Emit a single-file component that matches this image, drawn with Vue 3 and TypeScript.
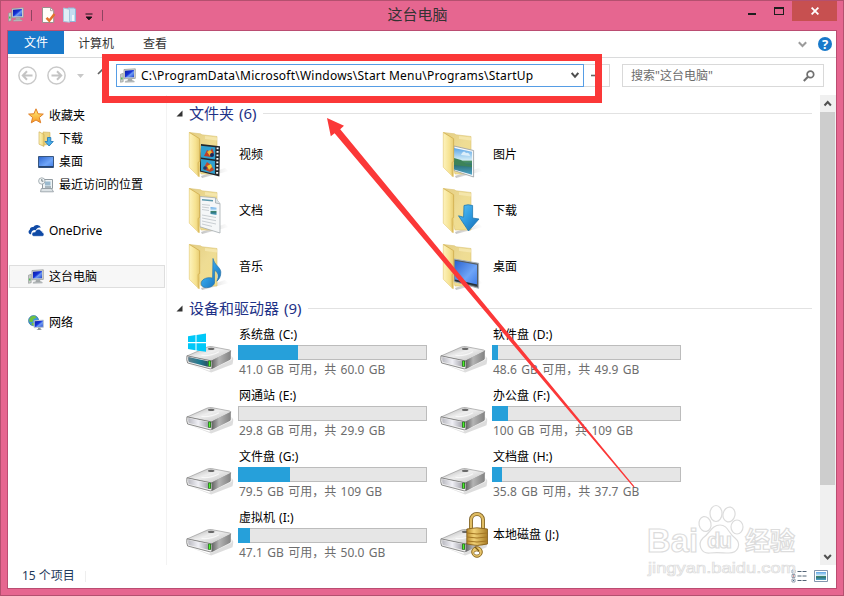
<script setup lang="ts">
interface NavItem { label: string; icon: string; level: number; selected?: boolean; gap?: boolean }
interface Folder { label: string; icon: string }
interface Drive { name: string; info?: string; used?: number; icon: string }

const nav: NavItem[] = [
  { label: '收藏夹', icon: 'star', level: 0 },
  { label: '下载', icon: 'dl-small', level: 1 },
  { label: '桌面', icon: 'desk-small', level: 1 },
  { label: '最近访问的位置', icon: 'recent', level: 1 },
  { label: 'OneDrive', icon: 'cloud', level: 0, gap: true },
  { label: '这台电脑', icon: 'pc', level: 0, gap: true, selected: true },
  { label: '网络', icon: 'network', level: 0, gap: true },
]

const folders: Folder[] = [
  { label: '视频', icon: 'ov-video' },
  { label: '图片', icon: 'ov-picture' },
  { label: '文档', icon: 'ov-document' },
  { label: '下载', icon: 'ov-download' },
  { label: '音乐', icon: 'ov-music' },
  { label: '桌面', icon: 'ov-desktop' },
]

const drives: Drive[] = [
  { name: '系统盘 (C:)', info: '41.0 GB 可用，共 60.0 GB', used: 60, icon: 'system' },
  { name: '软件盘 (D:)', info: '48.6 GB 可用，共 49.9 GB', used: 6, icon: 'plain' },
  { name: '网通站 (E:)', info: '29.8 GB 可用，共 29.9 GB', used: 0, icon: 'plain' },
  { name: '办公盘 (F:)', info: '100 GB 可用，共 109 GB', used: 16, icon: 'plain' },
  { name: '文件盘 (G:)', info: '79.5 GB 可用，共 109 GB', used: 52, icon: 'plain' },
  { name: '文档盘 (H:)', info: '35.8 GB 可用，共 37.7 GB', used: 10, icon: 'plain' },
  { name: '虚拟机 (I:)', info: '47.1 GB 可用，共 50.0 GB', used: 12, icon: 'plain' },
  { name: '本地磁盘 (J:)', icon: 'locked' },
]
</script>

<template>
  <div class="window">
    <svg class="defs" width="0" height="0" aria-hidden="true">
      <defs>
        <linearGradient id="g-screen" x1="0" y1="0" x2="1" y2="1">
          <stop offset="0" stop-color="#0a1c9c" /><stop offset=".45" stop-color="#1532d8" /><stop offset=".6" stop-color="#6f9cf4" /><stop offset="1" stop-color="#1c3fc8" />
        </linearGradient>
        <linearGradient id="g-front" x1="0" y1="0" x2="1" y2="0">
          <stop offset="0" stop-color="#fdf3bd" /><stop offset=".6" stop-color="#f6e290" /><stop offset="1" stop-color="#e6cb72" />
        </linearGradient>
        <linearGradient id="g-back" x1="0" y1="0" x2="1" y2="1">
          <stop offset="0" stop-color="#e3cd82" /><stop offset=".5" stop-color="#eedc94" /><stop offset="1" stop-color="#f3df8c" />
        </linearGradient>
        <linearGradient id="g-blue" x1="0" y1="0" x2="1" y2="1">
          <stop offset="0" stop-color="#5cc4f5" /><stop offset=".5" stop-color="#2e9ae0" /><stop offset="1" stop-color="#1467b0" />
        </linearGradient>
        <linearGradient id="g-desk" x1="0" y1="0" x2="1" y2="1">
          <stop offset="0" stop-color="#2b63cf" /><stop offset=".6" stop-color="#6fa5f7" /><stop offset="1" stop-color="#3f7ce8" />
        </linearGradient>
        <linearGradient id="g-land" x1="0" y1="0" x2="0" y2="1">
          <stop offset="0" stop-color="#5ba5e6" /><stop offset=".45" stop-color="#d2ecf7" /><stop offset=".5" stop-color="#4c9160" /><stop offset=".65" stop-color="#2d7379" /><stop offset="1" stop-color="#4fa3c9" />
        </linearGradient>
        <linearGradient id="g-top" x1="0" y1="0" x2="1" y2="1">
          <stop offset="0" stop-color="#a9a9a9" /><stop offset=".45" stop-color="#eeeeee" /><stop offset="1" stop-color="#bdbdbd" />
        </linearGradient>
        <linearGradient id="g-side" x1="0" y1="0" x2="1" y2="0">
          <stop offset="0" stop-color="#5e5e5e" /><stop offset=".4" stop-color="#b4b4b4" /><stop offset="1" stop-color="#828282" />
        </linearGradient>
        <linearGradient id="g-face" x1="0" y1="0" x2="1" y2="0">
          <stop offset="0" stop-color="#b9b9c0" /><stop offset=".5" stop-color="#f0f0f6" /><stop offset="1" stop-color="#a6a6ae" />
        </linearGradient>
        <linearGradient id="g-teal" x1="0" y1="0" x2="1" y2="0">
          <stop offset="0" stop-color="#5f7d8a" /><stop offset=".6" stop-color="#1c7a91" /><stop offset="1" stop-color="#2b5362" />
        </linearGradient>
        <linearGradient id="g-gold" x1="0" y1="0" x2="1" y2="0">
          <stop offset="0" stop-color="#b98b2c" /><stop offset=".35" stop-color="#f2d277" /><stop offset="1" stop-color="#a97c24" />
        </linearGradient>
        <linearGradient id="g-shade" x1="0" y1="0" x2="1" y2="0">
          <stop offset="0" stop-color="#777" stop-opacity=".45" /><stop offset="1" stop-color="#999" stop-opacity="0" />
        </linearGradient>
        <linearGradient id="g-star" x1="0" y1="0" x2="0" y2="1">
          <stop offset="0" stop-color="#fff07e" /><stop offset="1" stop-color="#f79a22" />
        </linearGradient>
      </defs>

      <symbol id="pc" viewBox="0 0 16 16">
        <path d="M.5 6.2l2.7-.9v8.400l-2.700.6z" fill="#c9ccca" stroke="#8c9290" stroke-width=".6" />
        <path d="M1.200 9.600h1.200v2H1.200z" fill="#38b838" />
        <path d="M4 1.500l11.300-.7v9.600L4 10.800z" fill="#d5d8d6" stroke="#8d9294" stroke-width=".7" />
        <path d="M5 2.700l9-.6v7.100l-9 .4z" fill="url(#g-screen)" />
        <path d="M8 10.800h4l.6 2.100H7.400z" fill="#a5aaab" /><path d="M5.500 13l8-.3 1 1.300-9.300.3z" fill="#bfc4c5" stroke="#8d9294" stroke-width=".4" />
      </symbol>
      <symbol id="star" viewBox="0 0 16 16">
        <path d="M8 .8l2.100 5 5.200.3-4 3.400 1.400 5.300L8 12l-4.700 2.800 1.300-5.300-4-3.400 5.300-.3z" fill="url(#g-star)" stroke="#e07f28" stroke-width="1" stroke-linejoin="round" />
      </symbol>
      <symbol id="dl-small" viewBox="0 0 16 16">
        <path d="M5 1l7 .4v12L5 14z" fill="#ecd584" stroke="#d0b158" stroke-width=".6" />
        <path d="M1 .8l5 2.600v12L1 13.200z" fill="url(#g-front)" stroke="#cba948" stroke-width=".6" />
        <path d="M9.500 6.500h3.300v4h2.500L11.100 15 7 10.500h2.500z" fill="#49aeea" stroke="#1c73b5" stroke-width=".8" />
      </symbol>
      <symbol id="desk-small" viewBox="0 0 16 16">
        <path d="M.5 2.500h15v11H.5z" fill="url(#g-desk)" stroke="#39577f" />
        <path d="M1 12h14v1.500H1z" fill="#264470" />
      </symbol>
      <symbol id="recent" viewBox="0 0 16 16">
        <path d="M4.500 2.500h10v9h-10z" fill="#eef3f5" stroke="#929ba1" />
        <path d="M7 4.500h5.500v4H7z" fill="#9bbace" /><path d="M7 10h6" stroke="#657b87" />
        <path d="M3.300 11.500h10.200l2 3.300H2.500z" fill="#dde3e6" stroke="#8f999f" stroke-width=".8" />
        <circle cx="3.800" cy="4" r="3.200" fill="#f2f5f6" stroke="#94a0a6" stroke-width=".8" /><path d="M3.800 2v2.200h1.600" fill="none" stroke="#566870" stroke-width=".8" />
      </symbol>
      <symbol id="cloud" viewBox="0 0 16 16">
        <path d="M3.100 11.300H2A2.600 2.600 0 0 1 1.800 6.700 3.100 3.100 0 0 1 5.300 4 4.400 4.400 0 0 1 12.900 4.600C9.800 4 8.200 5.700 8 7.200 5.200 6.700 3 8.300 3.100 11.300z" fill="#0f4aa6" />
        <path d="M5.700 13.300c-2.500-.4-2.300-4.100.5-4.200.2 0 .9.100.9.100.3-3 4.600-4.100 6.100-1.100 1.400.1 1.300 1 1.300 1.500 2.100.7 1.700 3.500-.1 3.700z" fill="#0f4aa6" stroke="#fff" stroke-width=".5" />
      </symbol>
      <symbol id="network" viewBox="0 0 16 16">
        <circle cx="5.600" cy="5.700" r="5.100" fill="#3f95dc" stroke="#246896" stroke-width=".6" />
        <path d="M3 1.500l4-.7 1.500 2-3 1.100-1 3-2.900.2-.5-2.500zM4 7.500l3 1-1 2.300-2.500-1z" fill="#70c23d" />
        <path d="M6.200 5.800l9.200-.7v7.100l-9.200.5z" fill="url(#g-screen)" stroke="#c1cad0" stroke-width="1" />
        <path d="M10 12.700h2.600v1.500l1.600.9H8.300l1.700-1z" fill="#8d9499" />
      </symbol>

      <symbol id="folder-back" viewBox="0 0 48 48">
        <path d="M14 45l24-8 4 3-27 7z" fill="url(#g-shade)" />
        <path d="M2.500 1.500l11 1.300 1.500 1 15 1.700V43H14z" fill="url(#g-back)" stroke="#dbc577" stroke-width=".6" />
        <path d="M18 5l12 1.400v3L18 8z" fill="#f6e9b2" opacity=".8" />
      </symbol>
      <symbol id="folder-front" viewBox="0 0 48 48">
        <path d="M2.300 1.400l10.300 6.300.2 38.600L2.300 36.200z" fill="url(#g-front)" />
        <path d="M2.300 1.400l10.300 6.300.1 22.700-1.600 1 .2 14.300" fill="none" stroke="#cda843" stroke-width=".7" />
        <path d="M2.300 1.400v34.800l9.500 9.600" fill="none" stroke="#e8cf7c" stroke-width=".7" />
      </symbol>
      <symbol id="ov-video" viewBox="0 0 48 48">
        <path d="M14 13l19 2.300-.6 30.300-19.700-5z" fill="#23262a" />
        <path d="M14 14.800l14.400 1.400-.2 12.200L14 26.500zM14 28l14 2.100-.1 12.800L14 39.800z" fill="#309fce" />
        <path d="M17 25l3-6 3 2 2-4 2 5-3 4z" fill="#be3e28" /><path d="M20 21l3-2 2 2-2 4z" fill="#efb832" />
        <path d="M16 38l4-7 4 3 3 5-4 2z" fill="#c1492d" /><path d="M20 35l4-2 1 3-3 3z" fill="#f0cb36" /><circle cx="25" cy="24" r="2" fill="#18265a" /><circle cx="18" cy="37" r="1.800" fill="#163f73" />
        <path d="M30.600 16.500l-.5 28" stroke="#fff" stroke-width="2" stroke-dasharray="1.8 1.7" />
      </symbol>
      <symbol id="ov-document" viewBox="0 0 48 48">
        <path d="M13 9.500l15.500 1.300 4.500 6V46L13 39.800z" fill="#f5f7f8" stroke="#a5acb0" stroke-width=".8" />
        <path d="M28.500 10.800v5.200l4.500.8" fill="#dce5e8" stroke="#9aa5aa" stroke-width=".7" />
        <path d="M15 12.700l11 1" stroke="#5a98ac" stroke-width="1.600" />
        <path d="M15 17.500l8 .8M15 20l7 .9M15 22.500l7 1M15 28l14 2.500M15 31l14 2.700M15 34l14 3M15 37l10 2.400" stroke="#bcc3c8" stroke-width=".8" />
        <path d="M23.500 20l6 .8v7.100l-6-1z" fill="url(#g-land)" />
      </symbol>
      <symbol id="ov-music" viewBox="0 0 48 48">
        <path d="M26 15.500c1.700 7.100 7.300 8.400 7.800 13.400.2 4.600-1.800 7.500-3.900 9.300 2.400-5.200 1.200-9-2.300-11v11.600c0 3.700-3.800 5.800-8 5.800-4 0-6-2.300-5.200-5.400 1-3.600 6.600-5.400 11.200-4z" fill="url(#g-blue)" stroke="#2774aa" stroke-width=".7" />
      </symbol>
      <symbol id="ov-picture" viewBox="0 0 48 48">
        <path d="M13 15l19.600 4.500V46L13 39.500z" fill="#f6f8f9" stroke="#949ca1" stroke-width=".8" />
        <path d="M13 17l18 3.700v23L13 38.500z" fill="url(#g-land)" /><path d="M13 27l7 2 5 4 6 1v2l-18-2z" fill="#3d8359" /><path d="M21 22q2-3 4 0 3-1 4 3l-9-1z" fill="#eef8fd" opacity=".8" />
      </symbol>
      <symbol id="ov-download" viewBox="0 0 48 48">
        <path d="M23 18.500q4-1.500 8.600 0V31l6.400 1L27.500 44 17.500 28.800l5.100 1.400z" fill="url(#g-blue)" stroke="#1f78b1" stroke-width=".8" />
      </symbol>
      <symbol id="ov-desktop" viewBox="0 0 48 48">
        <path d="M13 16l24.600 4.300v25L13 38.500z" fill="#555c61" stroke="#a9b1b5" stroke-width="1" />
        <path d="M14 17.700l22 4v20.500l-22-5z" fill="url(#g-desk)" />
        <path d="M14 37.200l22 5" stroke="#233037" stroke-width="1.600" />
      </symbol>

      <symbol id="disk" viewBox="0 0 50 32" preserveAspectRatio="none">
        <path d="M5 22l20 7 23-12v-4l2 3-1 6-22 9z" fill="#777" opacity=".25" />
        <path d="M2 13L23 3.300q2-.8 4.500-.5L46 6.500q2 .5 1 1.800L27 18.500z" fill="url(#g-top)" stroke="#888" stroke-width=".6" />
        <path d="M27 18.300L47.200 7.400v8.400q0 1-1 1.600L29 26.500q-1 .5-2 .2z" fill="url(#g-side)" />
        <path d="M2 12.800q-.8 4.400.7 7.800L26 27q1.700.4 1.700-1V19.500q0-1.200-1.200-1.300z" fill="#efefef" stroke="#6c6c6c" stroke-width=".8" />
        <path d="M3.400 14.200q-.4 3.200.6 5.200l20 5.300v-6z" fill="url(#g-face)" />
        <path d="M23.800 18.200h3v6.500h-3z" fill="#23691c" /><path d="M24.600 18.800h1.400v5h-1.400z" fill="#4df22c" />
        <ellipse cx="27" cy="5.300" rx="3.300" ry="1.200" fill="#696969" /><path d="M17 12.500q10 1 18-4" fill="none" stroke="#fff" stroke-width="1.200" opacity=".7" />
      </symbol>
      <symbol id="system" viewBox="0 0 50 48">
        <use href="#disk" x="0" y="12" width="48.500" height="29.500" />
        <path d="M3.400 14.200q-.4 3.200.6 5.200l19.600 5.300v-6z" fill="url(#g-teal)" transform="translate(0 12) scale(.97 .92)" />
        <path d="M3 4.200l7.500-1.100v7H3zM11.500 3L21 1.600v8.500h-9.500zM3 11.200h7.500v7L3 17.100zM11.500 11.200H21v8.600l-9.500-1.400z" fill="#00c8f8" />
      </symbol>
      <symbol id="plain" viewBox="0 0 50 48">
        <use href="#disk" x="0" y="12" width="48.500" height="29.500" />
      </symbol>
      <symbol id="locked" viewBox="0 0 50 48" overflow="visible">
        <use href="#disk" x="0" y="12" width="48.500" height="29.500" />
        <g transform="translate(0 -4)">
          <path d="M32 19V9a6 6 0 0 1 12 0V19" fill="none" stroke="#7d6127" stroke-width="4" />
          <path d="M32 19V9a6 6 0 0 1 12 0V19" fill="none" stroke="#e0bd63" stroke-width="2.400" />
          <path d="M27.800 18q10-2.500 20.700 0V33q-10 3-20.700 0z" fill="url(#g-gold)" stroke="#805b18" stroke-width=".8" />
          <path d="M28 22q10 2 20 0M28 26q10 2 20 0M28 30q10 2 20 0" fill="none" stroke="#a47724" stroke-width="1" />
          <circle cx="38" cy="41" r="5.300" fill="#e9c66b" stroke="#8e6b22" stroke-width="1" /><ellipse cx="37.800" cy="42" rx="3" ry="2" fill="#fff" stroke="#7b5a18" stroke-width=".7" /><path d="M36 36l4 4" stroke="#7b5a18" stroke-width="1.200" />
        </g>
      </symbol>
    </svg>

    <header class="titlebar">
      <div class="quick">
        <svg class="i16"><use href="#pc" /></svg>
        <i class="sep"></i>
        <svg class="i16 check" viewBox="0 0 16 16"><path d="M2.500.5h8.200l3 3v12H2.500z" fill="#fffdf9" stroke="#9b918e" /><path d="M10.500.7v3h3" fill="none" stroke="#9b918e" stroke-width=".8" /><path d="M6.500 10.800l2.800 2.900L14.500 7" fill="none" stroke="#e2722c" stroke-width="2.500" /></svg>
        <svg class="i16 new" viewBox="0 0 16 16"><path d="M6 1h6l1.500 1v12.500H6z" fill="#c3ddf0" stroke="#8fb8d7" /><path d="M1.500 1l6 1.300v12.900l-6-.7z" fill="#e0edf6" stroke="#a5c6dd" /><path d="M11 8v6" stroke="#eef6fb" stroke-width="2" /></svg>
        <svg class="more" viewBox="0 0 8 8"><path d="M.5 1h7M1.200 4h5.600L4 6.800z" fill="#151015" stroke="#151015" stroke-width="1" /></svg>
        <i class="sep last"></i>
      </div>
      <h1>这台电脑</h1>
      <div class="controls">
        <i class="min"></i><i class="max"></i>
        <span class="close"><svg width="8" height="8" viewBox="0 0 8 8"><path d="M.6.6l6.800 6.800M7.400.6L.6 7.400" stroke="#fff" stroke-width="1.800" /></svg></span>
      </div>
    </header>

    <main class="client">
      <nav class="ribbon">
        <span class="file">文件</span><span class="tab">计算机</span><span class="tab second">查看</span>
        <svg class="expand" viewBox="0 0 9 7"><path d="M.8 1.200L4.500 5 8.200 1.200" fill="none" stroke="#9b9b9b" stroke-width="2" /></svg>
        <span class="help">?</span>
      </nav>

      <div class="addressbar">
        <svg class="nav-btn" viewBox="0 0 19 19"><circle cx="9.500" cy="9.500" r="8.600" fill="none" stroke="#c9c9c9" stroke-width="1.500" /><path d="M14.500 9.500H5.300M9 5.300L4.800 9.500 9 13.700" fill="none" stroke="#c4c4c4" stroke-width="2" /></svg>
        <svg class="nav-btn" viewBox="0 0 19 19"><circle cx="9.500" cy="9.500" r="8.600" fill="none" stroke="#c9c9c9" stroke-width="1.500" /><path d="M4.500 9.500h9.200M10 5.300l4.200 4.200-4.200 4.200" fill="none" stroke="#c4c4c4" stroke-width="2" /></svg>
        <svg class="history" viewBox="0 0 7 4"><path d="M0 0h7L3.500 4z" fill="#c8c8c8" /></svg>
        <svg class="up" viewBox="0 0 12 12"><path d="M1 6l5-5 5 5M6 1v10" fill="none" stroke="#626262" stroke-width="1.700" /></svg>
        <div class="address">
          <svg class="i16"><use href="#pc" /></svg>
          <span class="path">C:\ProgramData\Microsoft\Windows\Start Menu\Programs\StartUp</span>
          <svg class="drop" viewBox="0 0 8 7"><path d="M.7 1L4 4.800 7.300 1" fill="none" stroke="#4e4e4e" stroke-width="2" /></svg>
        </div>
        <div class="go"><svg width="12" height="8" viewBox="0 0 12 8"><path d="M0 3.500h8" stroke="#666" stroke-width="1.600" /></svg></div>
        <div class="search">
          <span>搜索"这台电脑"</span>
          <svg viewBox="0 0 12 12"><circle cx="7.400" cy="4.400" r="3.300" fill="none" stroke="#707070" stroke-width="1.700" /><path d="M5 6.800L.8 11" stroke="#707070" stroke-width="2.100" /></svg>
        </div>
      </div>

      <div class="body">
        <aside class="sidebar">
          <div v-for="n in nav" :key="n.label" class="nav-item" :class="{ sub: n.level === 1, gap: n.gap, selected: n.selected }">
            <svg class="i16"><use :href="'#' + n.icon" /></svg><span>{{ n.label }}</span>
          </div>
        </aside>

        <section class="content">
          <h2><svg viewBox="0 0 7 7"><path d="M6.500.5v6h-6z" fill="#333" /></svg><span>文件夹 (6)</span><i></i></h2>
          <div class="folders">
            <div v-for="f in folders" :key="f.label" class="folder">
              <svg viewBox="0 0 48 48"><use href="#folder-back" /><use :href="'#' + f.icon" /><use href="#folder-front" /></svg>
              <span>{{ f.label }}</span>
            </div>
          </div>
          <h2 class="devices"><svg viewBox="0 0 7 7"><path d="M6.500.5v6h-6z" fill="#333" /></svg><span>设备和驱动器 (9)</span><i></i></h2>
          <div class="drives">
            <div v-for="d in drives" :key="d.name" class="drive">
              <svg viewBox="0 0 50 48"><use :href="'#' + d.icon" /></svg>
              <div class="details" :class="{ single: !d.info }">
                <span class="name">{{ d.name }}</span>
                <div v-if="d.info" class="meter"><b :style="{ width: d.used + 'px' }"></b></div>
                <span v-if="d.info" class="info">{{ d.info }}</span>
              </div>
            </div>
          </div>
        </section>

        <div class="scrollbar">
          <svg viewBox="0 0 16 17"><path d="M4.500 10.500L7.700 7l3.200 3.500" fill="none" stroke="#505050" stroke-width="2" /></svg>
          <i class="thumb"></i>
          <svg class="down" viewBox="0 0 16 17"><path d="M4.300 7l3.300 3.500L10.900 7" fill="none" stroke="#505050" stroke-width="2" /></svg>
        </div>
      </div>

      <footer class="status">
        <span>15 个项目</span><i></i>
        <div class="views">
          <svg width="16" height="14" viewBox="0 0 16 14"><path d="M1 1h3v3H1zM1 5.500h3v3H1zM1 10h3v3H1z" fill="#fff" stroke="#8b95a5" stroke-width=".9" /><path d="M2 2h1v1H2zM2 11h1v1H2z" fill="#476d8c" /><path d="M2 6.500h1v1H2z" fill="#b72e2e" /><path d="M6.500 2.500h4M11.500 2.500h4M6.500 7h4M11.500 7h4M6.500 11.500h4M11.500 11.500h4" stroke="#536476" /></svg>
          <svg width="14" height="12" viewBox="0 0 14 12"><path d="M.5.5h13v11H.5z" fill="#fff" stroke="#8395ad" /><path d="M2 2h10v8H2z" fill="url(#g-land)" /></svg>
        </div>
      </footer>
    </main>

    <svg class="watermark" width="156" height="84" viewBox="0 0 156 84">
      <g fill="#fff" fill-opacity=".85" stroke="#dcdcdc" stroke-width="1.200">
        <ellipse cx="61" cy="24" rx="6" ry="7.500" transform="rotate(-12 61 24)" /><ellipse cx="72" cy="13.500" rx="6" ry="8" /><ellipse cx="85" cy="14.500" rx="6" ry="7.500" transform="rotate(12 85 14.500)" /><ellipse cx="93" cy="27" rx="6" ry="7" />
        <path d="M76 25c8 0 8 8 15 13 7 6 3 15-6 15-6 0-12-1-19 0-9 1-13-9-7-15 7-5 9-13 17-13z" />
        <text x="3" y="52" font-size="34" font-weight="700" textLength="51" lengthAdjust="spacingAndGlyphs">Bai</text>
        <text x="63" y="48" font-size="22" font-weight="700" textLength="25">du</text>
        <text x="101" y="50" font-size="25" font-weight="700" textLength="50">经验</text>
        <text class="site" x="4" y="73" font-size="15" stroke-width=".7" textLength="148" lengthAdjust="spacingAndGlyphs">jingyan.baidu.com</text>
      </g>
    </svg>

    <div class="highlight"></div>
    <svg class="pointer" width="844" height="596" viewBox="0 0 844 596"><path d="M327 118l17 7.800-3.800 3.400L634.500 486.500l-1 .8L334.600 133.300l-3.800 3z" fill="#fb3838" /></svg>
  </div>
</template>

<style>
html, body { margin: 0; overflow: hidden; }
</style>

<style scoped>
* { box-sizing: border-box; }
.window { position: relative; width: 844px; height: 596px; padding: 0 6px 7px 6px; background: #e66690; border: 1px solid #b4506f; font: 12px/16px "Noto Sans", "Noto Sans CJK SC", sans-serif; color: #000; overflow: hidden; }
.defs { position: absolute; }
.i16 { width: 16px; height: 16px; flex: none; }
.titlebar { height: 29px; display: grid; grid-template-columns: 191px 1fr 200px; }
.quick { display: flex; align-items: center; padding: 0 0 1px 1px; }
.sep { width: 1px; height: 11px; background: #8e4460; margin-left: 7px; }
.last { margin-left: 2px; }
.check { margin-left: 8px; }
.new { margin-left: 6px; }
.more { width: 8px; height: 8px; margin: 3px 7px 0 7px; }
h1 { margin: 0; padding-top: 3px; text-align: center; font-size: 15px; line-height: 20px; font-weight: 400; color: #333; }
.controls { display: flex; justify-content: flex-end; align-items: flex-start; }
.min { width: 8px; height: 2px; margin: 12px 18px 0 0; background: #1e1e1e; }
.max { width: 10px; height: 8px; margin: 6px 8px 0 0; border: 1px solid #1e1e1e; border-top-width: 2px; }
.close { width: 45px; height: 20px; background: #c75050; display: grid; place-items: center; }
.client { height: 559px; border: 1px solid #bb4d72; background: #fff; display: flex; flex-direction: column; }
.ribbon { height: 27px; flex: none; display: flex; border-bottom: 1px solid #dadbdc; color: #333; line-height: 25px; }
.file { width: 56px; height: 23px; line-height: 23px; text-align: center; color: #fff; background: #1979ca; }
.tab { margin-left: 14px; }
.second { margin-left: 29px; }
.expand { width: 9px; height: 7px; margin: 10px 11px 0 auto; }
.help { width: 14px; height: 14px; margin: 6px 4px 0 0; border-radius: 50%; background: #1979ca; color: #fff; font-weight: 700; font-size: 13px; line-height: 14px; text-align: center; }
.addressbar { height: 37px; flex: none; display: flex; align-items: center; padding: 0 12px 2px 10px; }
.nav-btn { width: 19px; height: 19px; margin-right: 10px; }
.history { width: 7px; height: 4px; margin-left: 1px; }
.up { width: 12px; height: 12px; margin: -3px 0 0 13px; }
.address { width: 468px; height: 23px; margin-left: 7px; border: 1px solid #569de5; display: flex; align-items: center; padding: 0 4px 0 3px; }
.path { margin-left: 5px; font-size: 12px; white-space: nowrap; letter-spacing: .23px; }
.drop { width: 8px; height: 7px; margin-left: auto; }
.go { width: 26px; height: 23px; border: 1px solid #d9d9d9; border-left: 0; display: flex; align-items: center; padding-left: 7px; }
.search { width: 202px; height: 23px; margin-left: auto; border: 1px solid #d9d9d9; display: flex; align-items: center; justify-content: space-between; padding: 0 8px; color: #6d6d6d; }
.search svg { width: 12px; height: 12px; }
.body { height: 470px; flex: none; display: flex; }
.sidebar { width: 159px; padding-top: 9px; border-right: 1px solid #f3f3f3; }
.nav-item { width: 156px; height: 23px; margin-left: 1px; padding-left: 18px; border: 1px solid transparent; display: flex; align-items: center; }
.nav-item span { margin-left: 5px; }
.sub { padding-left: 28px; }
.gap { margin-top: 23px; }
.selected { background: #f7f7f7; border-color: #dedede; }
.content { flex: 1; padding: 8px 8px 0 9px; }
h2 { height: 20px; margin: 0; display: flex; align-items: center; font-size: 15px; line-height: 20px; font-weight: 400; color: #1e3287; word-spacing: 1px; }
h2 svg { width: 7px; height: 7px; margin-right: 6px; }
h2 i { flex: 1; height: 1px; margin-left: 7px; background: #e2e2e2; }
.folders { display: grid; grid-template-columns: 254px 254px; grid-auto-rows: 56px; padding: 4px 0 0 11px; }
.folder { display: flex; align-items: center; }
.folder svg { width: 48px; height: 48px; margin-top: -1px; }
.folder span { margin: -1px 0 0 4px; }
.devices { margin-top: 3px; }
.drives { display: grid; grid-template-columns: 254px 254px; grid-auto-rows: 61px; padding: 7px 0 0 9px; }
.drive { display: flex; }
.drive > svg { width: 50px; height: 48px; margin: 7px 3px 0 0; overflow: visible; }
.details { display: flex; flex-direction: column; }
.name { margin: 2px 0 0 1px; line-height: 16px; word-spacing: 1px; }
.meter { width: 189px; height: 15px; margin-top: 2px; border: 1px solid #bcbcbc; background: #e6e6e6; }
.meter b { display: block; height: 15px; margin: -1px 0 0 -1px; background: #26a0da; }
.info { margin: 2px 0 0 1px; color: #6d6d6d; word-spacing: 1.3px; }
.single { padding-top: 17px; }
.scrollbar { width: 16px; background: #f0f0f0; display: flex; flex-direction: column; }
.scrollbar svg { width: 16px; height: 17px; }
.thumb { width: 15px; height: 373px; background: #cdcdcd; }
.down { margin-top: auto; }
.status { flex: 1; display: flex; align-items: center; padding: 0 8px 1px 14px; color: #1e395b; }
.status > i { width: 1px; height: 11px; margin-left: 10px; background: #eee; }
.views { margin-left: auto; display: flex; align-items: center; gap: 7px; }
.watermark { position: absolute; left: 643px; top: 499px; font-family: "Liberation Sans", "Noto Sans CJK SC", sans-serif; }
.site { font-family: "Liberation Sans", sans-serif; }
.highlight { position: absolute; left: 101px; top: 53px; width: 500px; height: 49px; border: 7px solid #fb3838; }
.pointer { position: absolute; left: -1px; top: -1px; }
</style>
